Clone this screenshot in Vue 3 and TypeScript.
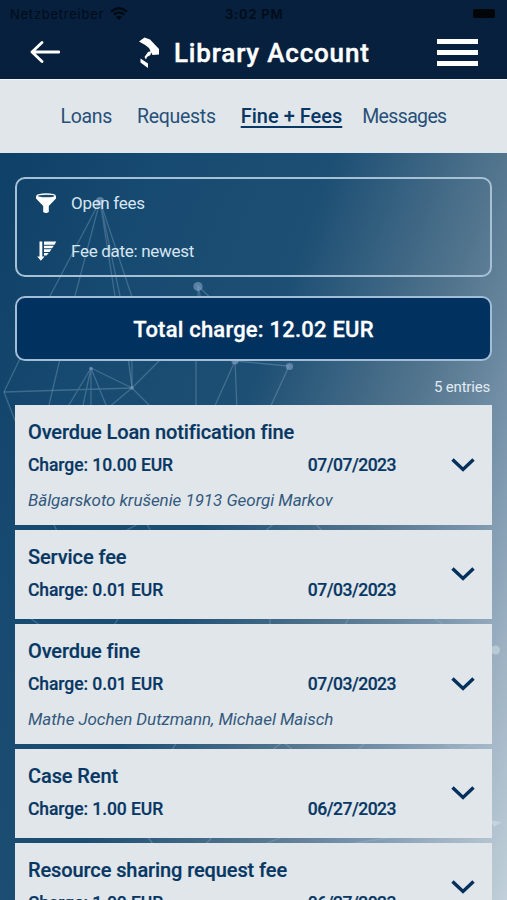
<script setup lang="ts">
interface Fee {
  title: string
  amount: string
  date: string
  note?: string
}

const tabs: string[] = ['Loans', 'Requests', 'Fine + Fees', 'Messages']
const activeTab = 'Fine + Fees'

const fees: Fee[] = [
  { title: 'Overdue Loan notification fine', amount: '10.00 EUR', date: '07/07/2023', note: 'Bălgarskoto krušenie 1913 Georgi Markov' },
  { title: 'Service fee', amount: '0.01 EUR', date: '07/03/2023' },
  { title: 'Overdue fine', amount: '0.01 EUR', date: '07/03/2023', note: 'Mathe Jochen Dutzmann, Michael Maisch' },
  { title: 'Case Rent', amount: '1.00 EUR', date: '06/27/2023' },
  { title: 'Resource sharing request fee', amount: '1.00 EUR', date: '06/27/2023' },
]
</script>

<template>
  <div class="screen">
    <svg class="network" width="507" height="900" viewBox="0 0 507 900" aria-hidden="true">
      <g class="lines">
        <path d="M100 201L50 296L4 392L38 480M100 201L75 296L49 405M100 201L115 296L129 362L132 388M100 201L120 296L132 388M100 201L132 297" />
        <path d="M4 392L132 388L91 368L66 410M91 368L82 410M91 368V410M91 368L108 410M132 388L108 408M132 388L151 407M132 388L198 322V286L215 302M198 286L201 300M132 388V350" />
        <path d="M196 410V300M235 361L213 410M235 361L237 410M235 361L289 366L269 410" />
        <path d="M52 520L58 534M120 534L145 520L152 534M262 534L278 520M325 534L312 520M30 618L44 628M112 628L120 616M270 628V616M343 628L350 616M430 616L446 626" />
        <path d="M172 750L178 740M272 750L283 742L293 750M358 750L368 740M444 742L455 750L480 742M147 836L153 844M206 844L213 836M265 844L285 836M350 844L400 836M492 825L502 821" />
      </g>
      <g class="nodes">
        <circle cx="100" cy="201" r="4" /><circle cx="198" cy="286.500" r="4.600" />
        <circle cx="235" cy="361" r="3.500" /><circle cx="289.500" cy="366.500" r="3.600" />
        <circle cx="132" cy="388" r="1.800" /><circle cx="91" cy="368.500" r="1.800" />
        <circle class="pale" cx="495.500" cy="650" r="4.500" />
        <path class="pale" d="M490 820L502 822L494 827Z" />
      </g>
    </svg>

    <header class="header">
      <div class="status">
        <span class="carrier">Netzbetreiber</span>
        <svg class="wifi" width="18" height="13" viewBox="0 0 18 13">
          <path d="M1 4.600Q9-2 17 4.600M3.800 7.500Q9 3.400 14.200 7.500" />
          <path class="dot" d="M9 13L6 9.800Q9 7.600 12 9.800Z" />
        </svg>
        <span class="clock">3:02 PM</span>
        <span class="battery"></span>
      </div>
      <div class="bar">
        <svg class="back" width="30" height="22" viewBox="0 0 30 22"><path d="M12 1.500L2 11L12 20.500M2 11H29" /></svg>
        <div class="brand">
          <svg width="20" height="31" viewBox="0 0 20 31">
            <path d="M0 4.500L5.500 0.500L11 2.500L20 12V17.500L13.500 18L10 11Q6 7.500 0 4.500Z" />
            <path d="M9 15L12.500 14L11.500 18L8 20L7 22.500L5.500 20Z" />
            <path d="M1.500 21.500L9 26.500V31L1.500 25.500Z" />
          </svg>
          <h1 class="title">Library Account</h1>
        </div>
        <div class="menu"><i></i><i></i><i></i></div>
      </div>
    </header>

    <nav class="tabs">
      <a v-for="tab in tabs" :key="tab" class="tab" :class="{ active: tab === activeTab }">{{ tab }}</a>
    </nav>

    <main class="content">
      <section class="filters">
        <div class="filter">
          <svg width="22" height="20" viewBox="0 0 22 20">
            <path d="M1 3.300V5.500L8.200 13V19Q11 21 13.800 19V13L21 5.500V3.300Z" />
            <ellipse class="rim" cx="11" cy="3" rx="9.200" ry="2" />
          </svg>
          <span>Open fees</span>
        </div>
        <div class="filter">
          <svg width="22" height="20" viewBox="0 0 22 20">
            <path d="M4.500 0.500H7.300V15.500H9.500L5.900 19.800L2.200 15.500H4.500ZM9 0.500H21.300L19.500 3.700H9ZM9 4.700H18.800L17 7.200H9ZM9 8.200H16.500L14.500 10.900H9ZM9 11.900H13.800L11.500 14.500H9Z" />
          </svg>
          <span>Fee date: newest</span>
        </div>
      </section>

      <section class="total"><span>Total charge: 12.02 EUR</span></section>
      <p class="count"><span>{{ fees.length }} entries</span></p>

      <ul class="list">
        <li v-for="fee in fees" :key="fee.title" class="card">
          <div class="info">
            <h2 class="name">{{ fee.title }}</h2>
            <div class="row">
              <span class="charge">Charge: {{ fee.amount }}</span>
              <span class="date">{{ fee.date }}</span>
            </div>
            <p v-if="fee.note" class="note">{{ fee.note }}</p>
          </div>
          <svg class="chevron" width="26" height="16" viewBox="0 0 26 16"><path d="M2.500 3.500L13 13.500L23.500 3.500" /></svg>
        </li>
      </ul>
    </main>
  </div>
</template>

<style>
body {
  margin: 0;
  overflow: hidden;
}
</style>

<style scoped>
.screen {
  position: relative;
  width: 507px;
  height: 900px;
  overflow: hidden;
  display: flex;
  flex-direction: column;
  font-family: Roboto, "Open Sans", sans-serif;
  color: #073763;
  background: linear-gradient(110deg, #0e3f66 5%, #174a70 25%, #1d4f74 47%, #55778f 68%, #7390a8 78%, #9eb2c3 89%, #c1d0d9 100%);
}
.network {
  position: absolute;
  left: 0;
  top: 0;
}
.lines {
  fill: none;
  stroke: #a9c4e0;
  stroke-opacity: 0.28;
  stroke-width: 1.3;
}
.nodes {
  fill: #8fabd0;
  fill-opacity: 0.55;
}
.nodes .pale {
  fill: #d3e0ea;
}
.header {
  position: relative;
  height: 79px;
  flex: none;
  background: #06203e;
}
.status {
  display: grid;
  grid-template-columns: 100px 1fr 60px 1fr 101px;
  align-items: center;
  height: 27px;
  padding: 0 10px;
  font-family: Inter, sans-serif;
  font-size: 13px;
  color: #020c18;
}
.carrier {
  letter-spacing: 0.75px;
}
.wifi {
  fill: none;
  stroke: #020a14;
  stroke-width: 2.4;
}
.wifi .dot {
  fill: #020a14;
  stroke: none;
}
.clock {
  padding-left: 2px;
  font-weight: 600;
  letter-spacing: 0.8px;
  white-space: nowrap;
}
.battery {
  grid-column: 5;
  justify-self: end;
  width: 22px;
  height: 9px;
  margin-right: 2px;
  border-radius: 2px;
  background: #020609;
}
.bar {
  display: flex;
  align-items: center;
  height: 52px;
  padding: 0 29px 2px 30px;
  box-sizing: border-box;
}
.back {
  fill: none;
  stroke: #fff;
  stroke-width: 2.8;
  stroke-linecap: round;
  stroke-linejoin: round;
}
.brand {
  flex: 1;
  display: flex;
  align-items: center;
  gap: 15px;
  padding-left: 79px;
  color: #fff;
}
.brand svg {
  fill: #fff;
}
.title {
  margin: 2px 0 0;
  font-size: 26px;
  line-height: 32px;
  font-weight: 500;
  letter-spacing: 0.82px;
  -webkit-text-stroke: 0.4px currentColor;
  white-space: nowrap;
}
.menu {
  display: flex;
  flex-direction: column;
  gap: 6px;
  width: 41px;
}
.menu i {
  height: 5px;
  background: #fff;
}
.tabs {
  position: relative;
  flex: none;
  display: flex;
  justify-content: center;
  gap: 25px;
  height: 74px;
  padding-top: 24px;
  box-sizing: border-box;
  background: #e1e6eb;
  border-top: 1px solid #f0f4f7;
  border-bottom: 1px solid #dbe7f3;
}
.tab {
  font-size: 19.500px;
  line-height: 25px;
  letter-spacing: -0.3px;
  color: #275078;
}
.tab.active {
  margin-right: -5px;
  font-size: 20px;
  letter-spacing: 0;
  color: #073763;
  font-weight: 500;
  text-decoration: underline;
  text-decoration-thickness: 1.5px;
  text-underline-offset: 3px;
}
.tab:last-child {
  letter-spacing: -0.65px;
}
.content {
  position: relative;
  padding: 24px 15px 0;
}
.filters {
  display: flex;
  flex-direction: column;
  gap: 25px;
  height: 100px;
  padding: 12px 18px;
  box-sizing: border-box;
  border: 2px solid #a6c1d6;
  border-radius: 10px;
}
.filter {
  display: flex;
  align-items: center;
  gap: 14px;
  height: 24px;
  font-size: 17px;
  letter-spacing: -0.3px;
  color: #d7e5f1;
}
.filter svg {
  fill: #fff;
}
.filter .rim {
  fill: #184b70;
  stroke: #fff;
  stroke-width: 1.3;
}
.total {
  display: flex;
  align-items: center;
  justify-content: center;
  height: 65px;
  margin-top: 19px;
  padding-top: 1px;
  box-sizing: border-box;
  border: 2px solid #a1bdd8;
  border-radius: 10px;
  background: #00315f;
  color: #fff;
  font-size: 22px;
  font-weight: 500;
  letter-spacing: 0.21px;
  -webkit-text-stroke: 0.3px currentColor;
}
.count {
  margin: 15px 2px 7px;
  height: 22px;
  line-height: 22px;
  text-align: right;
  font-size: 15px;
  letter-spacing: -0.2px;
  color: #e1ebf3;
}
.list {
  display: flex;
  flex-direction: column;
  gap: 5px;
  margin: 0;
  padding: 0;
  list-style: none;
}
.card {
  display: flex;
  align-items: center;
  justify-content: space-between;
  padding: 14px 16px 17px 13px;
  background: #e1e6eb;
}
.info {
  width: 368px;
}
.name {
  margin: 0;
  font-size: 20px;
  line-height: 26px;
  font-weight: 500;
  letter-spacing: -0.1px;
  -webkit-text-stroke: 0.2px currentColor;
}
.row {
  display: flex;
  justify-content: space-between;
  margin-top: 8px;
  font-size: 17.500px;
  line-height: 24px;
  font-weight: 500;
  letter-spacing: -0.07px;
  -webkit-text-stroke: 0.2px currentColor;
}
.date {
  letter-spacing: -0.5px;
}
.note {
  margin: 13px 0 -3px;
  font-size: 17px;
  line-height: 21px;
  font-style: italic;
  letter-spacing: -0.05px;
  color: #33597d;
  white-space: nowrap;
}
.chevron {
  fill: none;
  stroke: #04305c;
  stroke-width: 3.4;
}
</style>
